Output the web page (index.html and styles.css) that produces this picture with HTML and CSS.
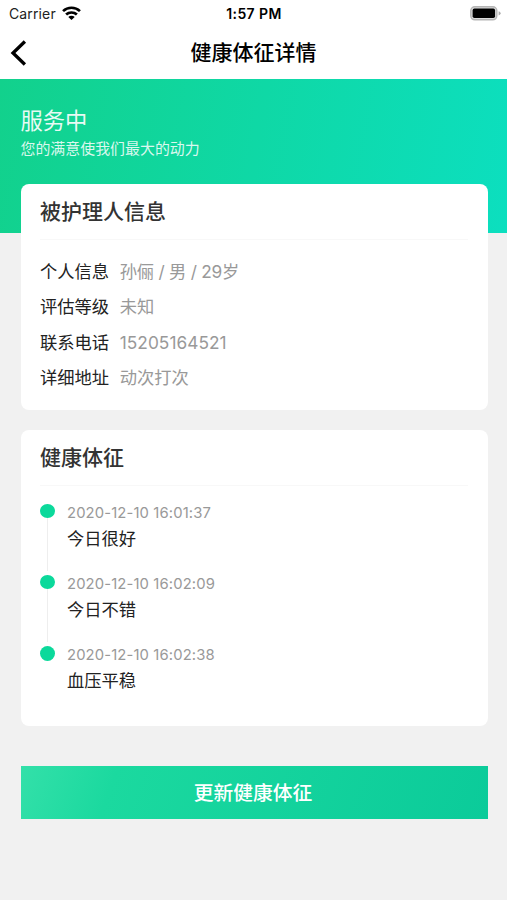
FILE: index.html
```html
<!DOCTYPE html>
<html lang="zh-CN">
<head>
<meta charset="utf-8">
<meta name="viewport" content="width=device-width, initial-scale=1">
<title>健康体征详情</title>
<link rel="stylesheet" href="styles.css">
</head>
<body>
<header class="topbar">
  <div class="status">
    <div class="carrier"><span>Carrier</span>
      <svg class="wifi" width="19" height="14" viewBox="0 0 18 14" preserveAspectRatio="none" fill="none" stroke="#000" stroke-width="2.5"><path d="M1 5.1a11.4 11.4 0 0 1 16 0"/><path d="M3.9 8.5a7.2 7.2 0 0 1 10.2 0"/><path d="M9 14 6 10.9a4.2 4.2 0 0 1 6 0Z" fill="#000" stroke="none"/></svg>
    </div>
    <time class="clock">1:57 PM</time>
    <svg class="battery" width="31" height="15" viewBox="0 0 31 15"><rect x=".8" y=".8" width="26" height="13" rx="4" fill="#ddd" stroke="#b5b5b5" stroke-width="1.5"/><rect x="2.6" y="2.6" width="22.5" height="9.4" rx="1.8"/><path d="M28.6 5.2q2 .7 2 2.1t-2 2.1Z" fill="#aaa"/></svg>
  </div>
  <nav class="nav">
    <svg class="back" width="17" height="26" viewBox="0 0 17 26" fill="none" stroke="#000" stroke-width="3.3"><path d="M14.9 1.5 3 13l11.9 11.5"/></svg>
    <h1>健康体征详情</h1>
  </nav>
</header>
<section class="hero">
  <h2>服务中</h2>
  <p>您的满意使我们最大的动力</p>
</section>
<main>
  <section class="card person">
    <h3>被护理人信息</h3>
    <dl>
      <div><dt>个人信息</dt><dd class="profile">孙俪 / 男 / 29岁</dd></div>
      <div><dt>评估等级</dt><dd>未知</dd></div>
      <div><dt>联系电话</dt><dd class="phone">15205164521</dd></div>
      <div><dt>详细地址</dt><dd>动次打次</dd></div>
    </dl>
  </section>
  <section class="card signs">
    <h3>健康体征</h3>
    <ol>
      <li><div class="rail"><i></i></div><div><time>2020-12-10 16:01:37</time><p>今日很好</p></div></li>
      <li><div class="rail"><i></i></div><div><time>2020-12-10 16:02:09</time><p>今日不错</p></div></li>
      <li><div class="rail"><i></i></div><div><time>2020-12-10 16:02:38</time><p>血压平稳</p></div></li>
    </ol>
  </section>
  <button>更新健康体征</button>
</main>
</body>
</html>
```
FILE: styles.css
```css
* { box-sizing: border-box; margin: 0; padding: 0; }
body {
  min-height: 900px;
  background: #f1f1f1;
  color: #222;
  font-family: Inter, "Noto Sans CJK SC", sans-serif;
}
.topbar { height: 79px; background: #fff; color: #000; }
.status {
  height: 27px;
  padding: 0 6px 0 9px;
  display: grid;
  grid-template-columns: 1fr auto 1fr;
  align-items: center;
  font-size: 14px;
}
.carrier { display: flex; align-items: center; gap: 6px; color: #222; letter-spacing: .13px; }
.wifi { margin-top: -2px; }
.clock { font-size: 14px; font-weight: 600; letter-spacing: .4px; margin-right: 2px; }
.battery { justify-self: end; }
.nav {
  height: 52px;
  padding: 0 10px;
  display: grid;
  grid-template-columns: 17px 1fr 17px;
  align-items: center;
}
.nav h1 { text-align: center; font-size: 21px; line-height: 30px; font-weight: 500; }
.hero {
  height: 154px;
  padding: 26px 20.5px 0;
  background: linear-gradient(100deg, #12d18c, #0cdfbf);
  color: rgba(255, 255, 255, .92);
}
.hero h2 { font-size: 22.3px; line-height: 32px; font-weight: 400; }
.hero p { font-size: 14.95px; line-height: 25px; color: rgba(255, 255, 255, .85); }
main { padding: 0 19.5px 0 20.5px; margin-top: -49px; }
.card { background: #fff; border-radius: 8px; padding: 0 19.5px; }
.card h3 {
  height: 56px;
  padding-top: 12px;
  border-bottom: 1px solid #f8f8f8;
  color: #333;
  font-size: 21px;
  line-height: 32px;
  font-weight: 500;
}
.person { height: 226px; }
.person dl { padding-top: 14px; }
.person dl div { display: flex; gap: 10.6px; height: 35.4px; line-height: 35.4px; font-size: 17.3px; }
.person dt { color: #222; }
.person dd { color: #999; }
.person .profile { letter-spacing: -.25px; }
.person .phone { letter-spacing: .04px; }
.signs { height: 296px; margin-top: 20px; }
.signs ol { list-style: none; padding-top: 14px; }
.signs li { display: flex; gap: 12px; height: 71px; }
.rail { width: 15px; display: flex; flex-direction: column; align-items: center; padding-top: 4px; }
.rail i { width: 15px; height: 15px; border-radius: 50%; background: #0bd99b; }
.rail::after { content: ""; width: 1px; height: 56px; background: #eee; }
.signs li:last-child .rail::after { display: none; }
.signs li time { display: block; padding-top: 1px; font-size: 14.8px; line-height: 24px; letter-spacing: .13px; color: #999; }
.signs li p { font-size: 17.3px; line-height: 28px; color: #222; }
button {
  display: block;
  width: 100%;
  height: 53px;
  margin-top: 40px;
  padding: 0 2px 2px 0;
  border: 0;
  background: linear-gradient(110deg, #33e0a9, #1bd99f 20%, #0bcb9a);
  color: #fff;
  font: 500 19.8px/51px "Noto Sans CJK SC", sans-serif;
}
```
